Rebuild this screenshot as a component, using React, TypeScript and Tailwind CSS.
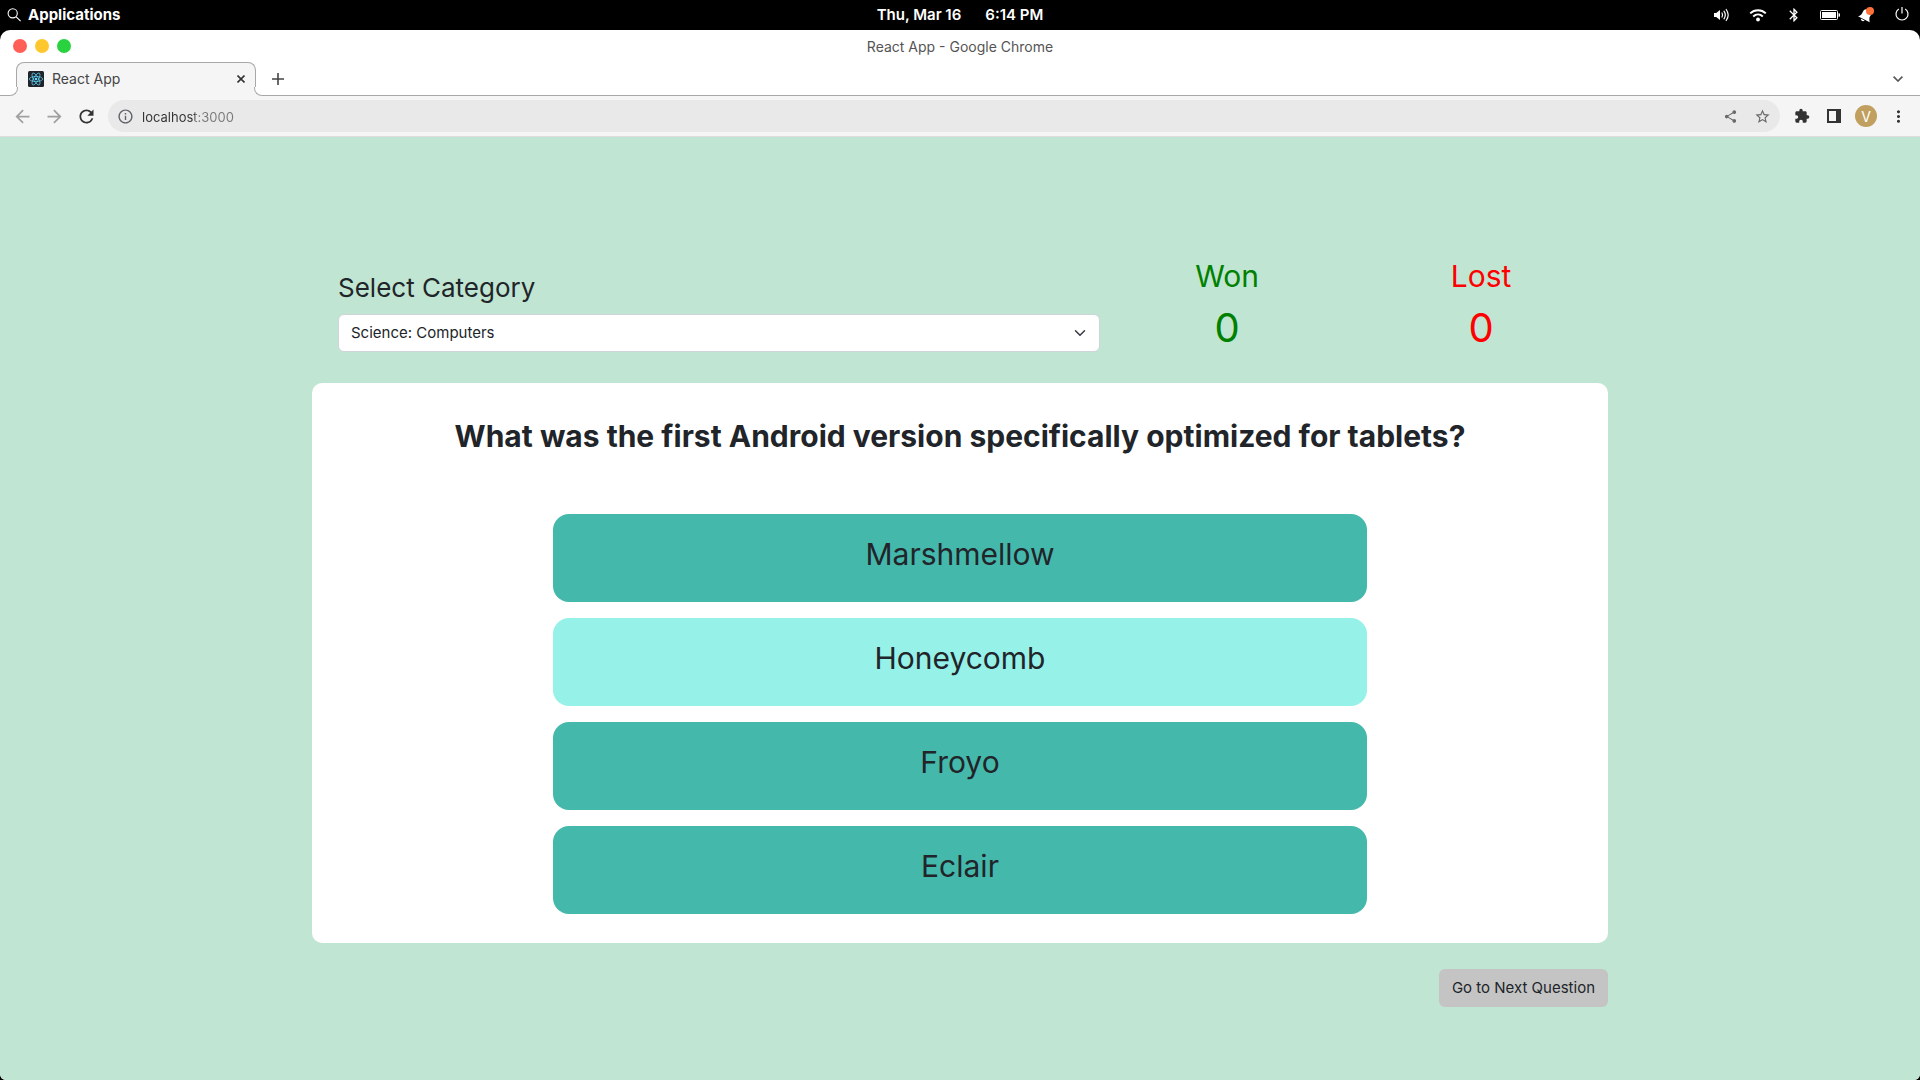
import { useState } from "react";
import type { ReactNode } from "react";
import {
  MdArrowBack,
  MdArrowForward,
  MdBluetooth,
  MdExtension,
  MdInfoOutline,
  MdMoreVert,
  MdRefresh,
  MdShare,
  MdStarBorder,
} from "react-icons/md";

const answers = ["Marshmellow", "Honeycomb", "Froyo", "Eclair"];

function SearchIcon() {
  return (
    <svg className="size-4" viewBox="0 0 16 16" fill="none" stroke="currentColor" strokeWidth="1.1">
      <circle cx="6.7" cy="6.3" r="4.6" />
      <path d="M10.2 9.8 14.6 14.2" />
    </svg>
  );
}

function VolumeIcon() {
  return (
    <svg className="h-4 w-[18px]" viewBox="0 0 18 16" fill="none" stroke="currentColor" strokeWidth="1.2" strokeLinecap="round">
      <path d="M1 6h2.2L7 3v10L3.2 10H1z" fill="currentColor" stroke="none" />
      <path d="M9 6q1.2 2 0 4" />
      <path d="M11 4.2q2.6 3.8 0 7.600" />
      <path d="M13.2 2.5q4 5.5 0 11" />
    </svg>
  );
}

function WifiIcon() {
  return (
    <svg className="h-4 w-[18px]" viewBox="0 0 18 16" fill="none" stroke="currentColor" strokeWidth="2">
      <path d="M1.2 6.4c4.400-4.200 11.200-4.200 15.600 0" />
      <path d="M4.2 9.5c2.800-2.600 6.800-2.600 9.600 0" />
      <circle cx="9" cy="12.5" r="1.900" fill="currentColor" stroke="none" />
    </svg>
  );
}

function BatteryIcon() {
  return (
    <svg className="h-4 w-5" viewBox="0 0 20 16" fill="none">
      <rect x="0.5" y="3.5" width="17" height="9" rx="1" stroke="currentColor" />
      <rect x="2" y="5" width="14" height="6" fill="currentColor" />
      <path d="M18.5 6.2h.7q.8 0 .8.8v2q0 .8-.8.8h-.7z" fill="currentColor" />
    </svg>
  );
}

function BellIcon() {
  return (
    <svg className="size-4" viewBox="0 0 16 16">
      <path d="M0 9.3C2.500 9 4 7 5 4.500 6 2.500 7.500 2 9 2.500L13 8C11.600 9.500 11 11 11.700 15.200z" fill="currentColor" />
      <path d="M2.800 11.600 6.600 13.500C5.200 15 2.900 14.200 2.800 11.600z" fill="currentColor" />
      <circle cx="12" cy="4" r="4" fill="#ff7139" />
    </svg>
  );
}

function PowerIcon() {
  return (
    <svg className="size-4" viewBox="0 0 16 16" fill="none" stroke="currentColor" strokeWidth="1.2">
      <path d="M4.800 1.900a6 6 0 1 0 6.400 0" />
      <path d="M8 0v6.500" />
    </svg>
  );
}

function ReactFavicon() {
  return (
    <svg className="size-4" viewBox="0 0 16 16" fill="none" stroke="#61dafb" strokeWidth="0.7">
      <rect width="16" height="16" rx="1.5" fill="#20232a" stroke="none" />
      <ellipse cx="8" cy="8" rx="6.700" ry="2.500" />
      <ellipse cx="8" cy="8" rx="6.700" ry="2.500" transform="rotate(60 8 8)" />
      <ellipse cx="8" cy="8" rx="6.700" ry="2.500" transform="rotate(120 8 8)" />
      <circle cx="8" cy="8" r="1.300" fill="#61dafb" stroke="none" />
    </svg>
  );
}

function SidePanelIcon() {
  return (
    <svg className="size-[14px]" viewBox="0 0 14 14">
      <path d="M0 0h14v14H0zM2 2v10h7V2z" fill="currentColor" fillRule="evenodd" />
    </svg>
  );
}

function IconButton({ label, className = "", children }: { label: string; className?: string; children: ReactNode }) {
  return (
    <button type="button" aria-label={label} className={"flex size-8 shrink-0 items-center justify-center " + className}>
      {children}
    </button>
  );
}

function TrayButton({ label, children }: { label: string; children: ReactNode }) {
  return (
    <button type="button" aria-label={label} className="flex h-5 w-5 items-center justify-center">
      {children}
    </button>
  );
}

function SystemBar() {
  return (
    <header className="grid h-[30px] grid-cols-3 items-center bg-black px-1.5 text-[15px] font-bold text-white">
      <button type="button" className="flex items-center gap-1.5 justify-self-start">
        <SearchIcon />
        Applications
      </button>
      <div className="flex gap-6 justify-self-center font-semibold">
        <span>Thu, Mar 16</span>
        <span>6:14 PM</span>
      </div>
      <div className="flex items-center gap-4 justify-self-end pr-0.5">
        <TrayButton label="Volume">
          <VolumeIcon />
        </TrayButton>
        <TrayButton label="Network">
          <WifiIcon />
        </TrayButton>
        <TrayButton label="Bluetooth">
          <MdBluetooth className="size-4" />
        </TrayButton>
        <TrayButton label="Battery">
          <BatteryIcon />
        </TrayButton>
        <TrayButton label="Notifications">
          <BellIcon />
        </TrayButton>
        <TrayButton label="Power">
          <PowerIcon />
        </TrayButton>
      </div>
    </header>
  );
}

function TitleBar() {
  return (
    <div className="grid h-8 grid-cols-3 items-center px-[13px]">
      <div className="flex gap-2">
        <button type="button" aria-label="Close window" className="size-3.5 rounded-full bg-[#ff5f57]" />
        <button type="button" aria-label="Minimize window" className="size-3.5 rounded-full bg-[#ffc72e]" />
        <button type="button" aria-label="Maximize window" className="size-3.5 rounded-full bg-[#28d33f]" />
      </div>
      <div className="text-center text-[14px] text-[#555555]">React App - Google Chrome</div>
    </div>
  );
}

function TabStrip() {
  return (
    <div className="flex h-[34px] items-stretch">
      <div className="w-4 border-b border-[#a8a8a8]" />
      <div className="relative flex w-60 items-center rounded-t-lg border border-b-0 border-[#a8a8a8] bg-[#f5f5f5] pr-1 pb-0.5 pl-[11px]">
        <span className="absolute bottom-0 -left-2 size-[9px] bg-[#f5f5f5]">
          <span className="block size-full rounded-br-lg border-r border-b border-[#a8a8a8] bg-white" />
        </span>
        <ReactFavicon />
        <span className="flex-1 pl-2 text-[14px] text-[#444444]">React App</span>
        <button type="button" aria-label="Close tab" className="flex size-5 items-center justify-center text-[#333333]">
          <svg className="size-2" viewBox="0 0 8 8" stroke="currentColor" strokeWidth="1.6">
            <path d="M.5.5l7 7M7.5.5l-7 7" />
          </svg>
        </button>
        <span className="absolute -right-2 bottom-0 size-[9px] bg-[#f5f5f5]">
          <span className="block size-full rounded-bl-lg border-b border-l border-[#a8a8a8] bg-white" />
        </span>
      </div>
      <div className="flex flex-1 items-center justify-between border-b border-[#a8a8a8] px-1.5">
        <IconButton label="New tab" className="text-[#444444]">
          <svg className="size-3" viewBox="0 0 12 12" stroke="currentColor" strokeWidth="1.6">
            <path d="M6 0v12M0 6h12" />
          </svg>
        </IconButton>
        <IconButton label="Search tabs" className="text-[#555555]">
          <svg className="h-1.5 w-2.5" viewBox="0 0 10 6" fill="none" stroke="currentColor" strokeWidth="1.6">
            <path d="M.6.6 5 5 9.4.6" />
          </svg>
        </IconButton>
      </div>
    </div>
  );
}

function Toolbar() {
  return (
    <div className="flex h-[41px] items-center border-b border-[#dcdcdc] bg-[#f5f5f5] px-1.5">
      <IconButton label="Back" className="text-[#a0a0a0]">
        <MdArrowBack className="size-[21px]" />
      </IconButton>
      <IconButton label="Forward" className="text-[#a0a0a0]">
        <MdArrowForward className="size-[21px]" />
      </IconButton>
      <IconButton label="Reload" className="text-[#333333]">
        <MdRefresh className="size-[21px]" />
      </IconButton>
      <div className="mx-1.5 flex h-8 flex-1 items-center rounded-full bg-[#e9e9e9] pr-0.5 pl-[9px]">
        <MdInfoOutline className="size-[17px] text-[#5f6368]" />
        <input
          type="text"
          aria-label="Address"
          defaultValue="localhost:3000"
          className="h-8 flex-1 bg-[linear-gradient(90deg,#333333_61px,#777777_61px)] bg-clip-text px-2 pt-0.5 text-[13px] text-transparent outline-none"
        />
        <IconButton label="Share" className="text-[#6a6a6a]">
          <MdShare className="size-[15px]" />
        </IconButton>
        <IconButton label="Bookmark this tab" className="text-[#6a6a6a]">
          <MdStarBorder className="size-[17px]" />
        </IconButton>
      </div>
      <IconButton label="Extensions" className="text-[#333333]">
        <MdExtension className="size-4" />
      </IconButton>
      <IconButton label="Side panel" className="text-[#333333]">
        <SidePanelIcon />
      </IconButton>
      <IconButton label="Profile">
        <span className="flex size-[22px] items-center justify-center rounded-full bg-[#c19f5f] text-[14px] text-white">V</span>
      </IconButton>
      <IconButton label="Menu" className="text-[#333333]">
        <MdMoreVert className="size-[19px]" />
      </IconButton>
    </div>
  );
}

function Score({ label, value, className }: { label: string; value: number; className: string }) {
  return (
    <div className={"text-center " + className}>
      <h2 className="mb-2 text-[30px] leading-10">{label}</h2>
      <p className="text-[40px] leading-[48px]">{value}</p>
    </div>
  );
}

function Quiz() {
  const [selected, setSelected] = useState("Honeycomb");
  return (
    <main className="flex-1 bg-[#c0e5d2] px-6 pt-[119px] pb-16 text-[#212529]">
      <div className="mx-auto max-w-[1296px]">
        <div className="grid grid-cols-[1fr_254px_254px]">
          <div className="flex flex-col pt-4 pl-[26px]">
            <label htmlFor="category" className="mb-2.5 text-[26px] leading-8">
              Select Category
            </label>
            <div className="relative">
              <select
                id="category"
                className="h-[38px] w-full appearance-none rounded-md border border-[#ced4da] bg-white px-3 text-[15px]"
              >
                <option>Science: Computers</option>
              </select>
              <svg
                className="pointer-events-none absolute top-[13px] right-3.5 size-3 text-[#343a40]"
                viewBox="0 0 16 16"
                fill="none"
                stroke="currentColor"
                strokeWidth="2"
                strokeLinecap="round"
                strokeLinejoin="round"
              >
                <path d="m2 5 6 6 6-6" />
              </svg>
            </div>
          </div>
          <Score label="Won" value={0} className="text-[#008000]" />
          <Score label="Lost" value={0} className="text-[#ff0000]" />
        </div>

        <section className="mt-[31px] rounded-[10px] bg-white px-6 pt-8 pb-[29px]">
          <h1 className="text-center text-[30px] leading-[42px] font-bold">
            What was the first Android version specifically optimized for tablets?
          </h1>
          <div className="mx-auto mt-[57px] flex max-w-[814px] flex-col gap-4">
            {answers.map((answer) => (
              <button
                key={answer}
                type="button"
                aria-pressed={answer === selected}
                onClick={() => setSelected(answer)}
                className={
                  "rounded-2xl pt-5 pb-7 text-[30px] leading-10 " +
                  (answer === selected ? "bg-[#96f1e9]" : "bg-[#45b8ac]")
                }
              >
                {answer}
              </button>
            ))}
          </div>
        </section>

        <div className="mt-[26px] flex justify-end">
          <button type="button" className="rounded-md bg-[#c4c4c4] px-[13px] py-[7px] text-[15px] leading-6">
            Go to Next Question
          </button>
        </div>
      </div>
    </main>
  );
}

export default function App() {
  return (
    <div className="flex min-h-screen flex-col bg-black font-['Inter','Liberation_Sans',sans-serif]">
      <SystemBar />
      <div className="flex flex-1 flex-col overflow-hidden rounded-t-[10px] rounded-b-md bg-white">
        <TitleBar />
        <TabStrip />
        <Toolbar />
        <Quiz />
      </div>
    </div>
  );
}
